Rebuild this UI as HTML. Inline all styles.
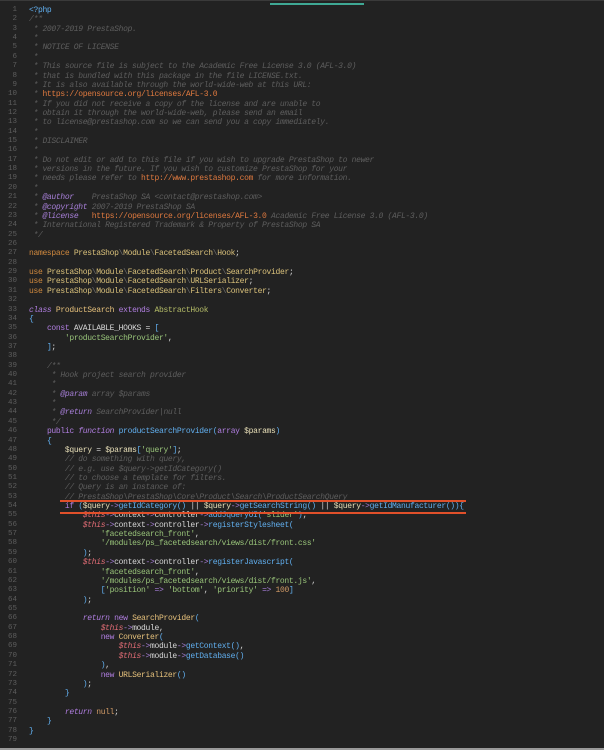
<!DOCTYPE html>
<html><head><meta charset="utf-8"><style>
html,body{margin:0;padding:0;background:#222222;width:604px;height:750px;overflow:hidden;position:relative}
.top{position:absolute;left:0;top:0;width:604px;height:1px;background:#3a3a3a}
.tab{position:absolute;left:270px;top:3px;width:94px;height:2px;background:#3fa894}
.bot{position:absolute;left:0;top:748px;width:604px;height:2px;background:#9a9a9a}
.nums{position:absolute;left:0;top:6px;width:17px;text-align:right;font:7.5px/9.36px "Liberation Mono",monospace;color:#5e5e5e;white-space:pre}
pre{position:absolute;left:29px;top:6px;margin:0;font:8px/9.36px "Liberation Mono",monospace;letter-spacing:-0.32px;color:#d7d7d7;white-space:pre}
.c{color:#5e5e5e;font-style:italic}
.u{color:#e07a3f;font-style:normal}
.t{color:#a77fd8;font-style:italic}
.k{color:#d0893e}
.n{color:#d9c07a}
.s{color:#6e6e6e}
.p{color:#b07ee0}
.pi{color:#b07ee0;font-style:italic}
.y{color:#e5c07b}
.g{color:#b5bd68}
.b{color:#61afef}
.str{color:#98c379}
.v{color:#e8dfb8}
.th{color:#e06c75;font-style:italic}
.ar{color:#a77fd8}
.o{color:#d19a66}
.w{color:#d7d7d7}
.box{position:absolute;left:60px;top:500px;width:406px;height:10px;border-top:2px solid #e0502a;border-bottom:2px solid #e0502a}
</style></head><body>
<div class="top"></div><div class="tab"></div><div class="bot"></div>
<div class="nums">1
2
3
4
5
6
7
8
9
10
11
12
13
14
15
16
17
18
19
20
21
22
23
24
25
26
27
28
29
30
31
32
33
34
35
36
37
38
39
40
41
42
43
44
45
46
47
48
49
50
51
52
53
54
55
56
57
58
59
60
61
62
63
64
65
66
67
68
69
70
71
72
73
74
75
76
77
78
79</div>
<pre><span class="b">&lt;?php</span>
<span class="c">/**
 * 2007-2019 PrestaShop.
 *
 * NOTICE OF LICENSE
 *
 * This source file is subject to the Academic Free License 3.0 (AFL-3.0)
 * that is bundled with this package in the file LICENSE.txt.
 * It is also available through the world-wide-web at this URL:
 * <span class="u">https://opensource.org/licenses/AFL-3.0</span>
 * If you did not receive a copy of the license and are unable to
 * obtain it through the world-wide-web, please send an email
 * to license@prestashop.com so we can send you a copy immediately.
 *
 * DISCLAIMER
 *
 * Do not edit or add to this file if you wish to upgrade PrestaShop to newer
 * versions in the future. If you wish to customize PrestaShop for your
 * needs please refer to <span class="u">http://www.prestashop.com</span> for more information.
 *
 * <span class="t">@author</span>    PrestaShop SA &lt;contact@prestashop.com&gt;
 * <span class="t">@copyright</span> 2007-2019 PrestaShop SA
 * <span class="t">@license</span>   <span class="u">https://opensource.org/licenses/AFL-3.0</span> Academic Free License 3.0 (AFL-3.0)
 * International Registered Trademark &amp; Property of PrestaShop SA
 */</span>

<span class="k">namespace</span> <span class="n">PrestaShop</span><span class="s">\</span><span class="n">Module</span><span class="s">\</span><span class="n">FacetedSearch</span><span class="s">\</span><span class="n">Hook</span><span class="w">;</span>

<span class="k">use</span> <span class="n">PrestaShop</span><span class="s">\</span><span class="n">Module</span><span class="s">\</span><span class="n">FacetedSearch</span><span class="s">\</span><span class="n">Product</span><span class="s">\</span><span class="n">SearchProvider</span>;
<span class="k">use</span> <span class="n">PrestaShop</span><span class="s">\</span><span class="n">Module</span><span class="s">\</span><span class="n">FacetedSearch</span><span class="s">\</span><span class="n">URLSerializer</span>;
<span class="k">use</span> <span class="n">PrestaShop</span><span class="s">\</span><span class="n">Module</span><span class="s">\</span><span class="n">FacetedSearch</span><span class="s">\</span><span class="n">Filters</span><span class="s">\</span><span class="n">Converter</span>;

<span class="pi">class</span> <span class="y">ProductSearch</span> <span class="p">extends</span> <span class="g">AbstractHook</span>
<span class="b">{</span>
    <span class="p">const</span> AVAILABLE_HOOKS = <span class="b">[</span>
        <span class="str">'productSearchProvider'</span>,
    <span class="b">]</span>;

    <span class="c">/**
     * Hook project search provider
     *
     * <span class="t">@param</span> array $params
     *
     * <span class="t">@return</span> SearchProvider|null
     */</span>
    <span class="p">public</span> <span class="pi">function</span> <span class="b">productSearchProvider</span><span class="b">(</span><span class="p">array</span> <span class="v">$params</span><span class="b">)</span>
    <span class="b">{</span>
        <span class="v">$query</span> = <span class="v">$params</span><span class="b">[</span><span class="str">'query'</span><span class="b">]</span>;
        <span class="c">// do something with query,
        // e.g. use $query->getIdCategory()
        // to choose a template for filters.
        // Query is an instance of:
        // PrestaShop\PrestaShop\Core\Product\Search\ProductSearchQuery</span>
        <span class="p">if</span> <span class="b">(</span><span class="v">$query</span><span class="ar">-&gt;</span><span class="b">getIdCategory()</span> || <span class="v">$query</span><span class="ar">-&gt;</span><span class="b">getSearchString()</span> || <span class="v">$query</span><span class="ar">-&gt;</span><span class="b">getIdManufacturer()){</span>
            <span class="th">$this</span><span class="ar">-&gt;</span>context<span class="ar">-&gt;</span>controller<span class="ar">-&gt;</span><span class="b">addJqueryUI(</span><span class="str">'slider'</span><span class="b">)</span>;
            <span class="th">$this</span><span class="ar">-&gt;</span>context<span class="ar">-&gt;</span>controller<span class="ar">-&gt;</span><span class="b">registerStylesheet(</span>
                <span class="str">'facetedsearch_front'</span>,
                <span class="str">'/modules/ps_facetedsearch/views/dist/front.css'</span>
            <span class="b">)</span>;
            <span class="th">$this</span><span class="ar">-&gt;</span>context<span class="ar">-&gt;</span>controller<span class="ar">-&gt;</span><span class="b">registerJavascript(</span>
                <span class="str">'facetedsearch_front'</span>,
                <span class="str">'/modules/ps_facetedsearch/views/dist/front.js'</span>,
                <span class="b">[</span><span class="str">'position'</span> <span class="ar">=&gt;</span> <span class="str">'bottom'</span>, <span class="str">'priority'</span> <span class="ar">=&gt;</span> <span class="o">100</span><span class="b">]</span>
            <span class="b">)</span>;

            <span class="pi">return</span> <span class="p">new</span> <span class="y">SearchProvider</span><span class="b">(</span>
                <span class="th">$this</span><span class="ar">-&gt;</span>module,
                <span class="p">new</span> <span class="y">Converter</span><span class="b">(</span>
                    <span class="th">$this</span><span class="ar">-&gt;</span>module<span class="ar">-&gt;</span><span class="b">getContext()</span>,
                    <span class="th">$this</span><span class="ar">-&gt;</span>module<span class="ar">-&gt;</span><span class="b">getDatabase()</span>
                <span class="b">)</span>,
                <span class="p">new</span> <span class="y">URLSerializer</span><span class="b">()</span>
            <span class="b">)</span>;
        <span class="b">}</span>

        <span class="pi">return</span> <span class="o">null</span>;
    <span class="b">}</span>
<span class="b">}</span>
</pre>
<div class="box"></div>
</body></html>
